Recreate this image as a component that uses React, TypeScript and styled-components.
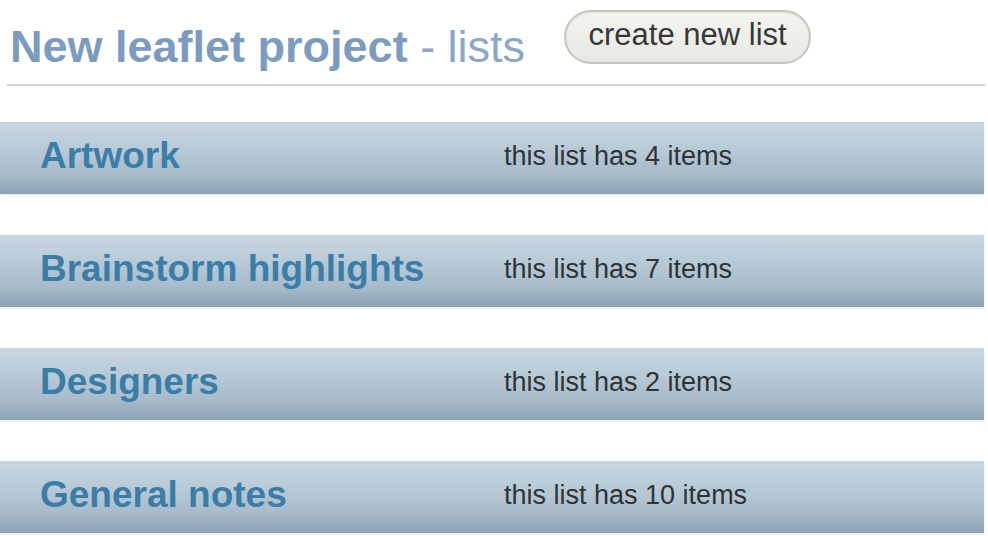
import styled, { createGlobalStyle } from "styled-components";

const GlobalStyle = createGlobalStyle`
  html, body {
    margin: 0;
    padding: 0;
    background: #ffffff;
  }
  body {
    font-family: "Liberation Sans", Arial, sans-serif;
    overflow: hidden;
  }
`;

interface ListInfo {
  name: string;
  count: number;
}

const lists: ListInfo[] = [
  { name: "Artwork", count: 4 },
  { name: "Brainstorm highlights", count: 7 },
  { name: "Designers", count: 2 },
  { name: "General notes", count: 10 },
];

export default function App() {
  return (
    <>
      <GlobalStyle />
      <Page>
        <Header>
          <Title>
            <strong>New leaflet project</strong> - lists
          </Title>
          <CreateButton type="button">create new list</CreateButton>
        </Header>
        <Divider />
        <ListStack>
          {lists.map((list) => (
            <ListRow key={list.name}>
              <ListName>{list.name}</ListName>
              <ListCount>this list has {list.count} items</ListCount>
            </ListRow>
          ))}
        </ListStack>
      </Page>
    </>
  );
}

const Page = styled.div`
  width: 988px;
  height: 536px;
  display: flex;
  flex-direction: column;
`;

const Header = styled.header`
  box-sizing: border-box;
  height: 84px;
  padding: 10px 0 0 10px;
  display: flex;
  align-items: flex-start;
  gap: 39px;
`;

const Title = styled.h1`
  margin: 12px 0 0;
  font-size: 45px;
  line-height: 50px;
  font-weight: normal;
  color: #8aa7c7;
  white-space: nowrap;

  strong {
    font-weight: bold;
    color: #7b9cc0;
  }
`;

const CreateButton = styled.button`
  box-sizing: border-box;
  width: 247px;
  height: 54px;
  border-radius: 27px;
  border: 2px solid #c6c6c1;
  background: linear-gradient(#f4f4f0, #e8e8e3);
  box-shadow: inset 0 1px 2px rgba(0, 0, 0, 0.08);
  font-family: "Liberation Sans", Arial, sans-serif;
  font-size: 31px;
  color: #383838;
  padding: 0 0 4px;
  cursor: pointer;
`;

const Divider = styled.hr`
  margin: 0 3px 0 7px;
  height: 2px;
  border: none;
  background: #d0d0d0;
`;

const ListStack = styled.ul`
  list-style: none;
  margin: 36px 4px 0 0;
  padding: 0;
  display: flex;
  flex-direction: column;
  gap: 41px;
`;

const ListRow = styled.li`
  box-sizing: border-box;
  height: 72px;
  padding: 0 0 4px 40px;
  display: grid;
  grid-template-columns: 464px 1fr;
  align-items: center;
  background: linear-gradient(
    #c8d6e1 0%,
    #bacbd8 35%,
    #a9bccb 70%,
    #8ca3b3 100%
  );
  box-shadow: 0 1px 2px rgba(120, 140, 160, 0.25);
`;

const ListName = styled.span`
  font-size: 37px;
  font-weight: bold;
  color: #3a7ea8;
  white-space: nowrap;
`;

const ListCount = styled.span`
  font-size: 27px;
  color: #2f3336;
  white-space: nowrap;
`;
